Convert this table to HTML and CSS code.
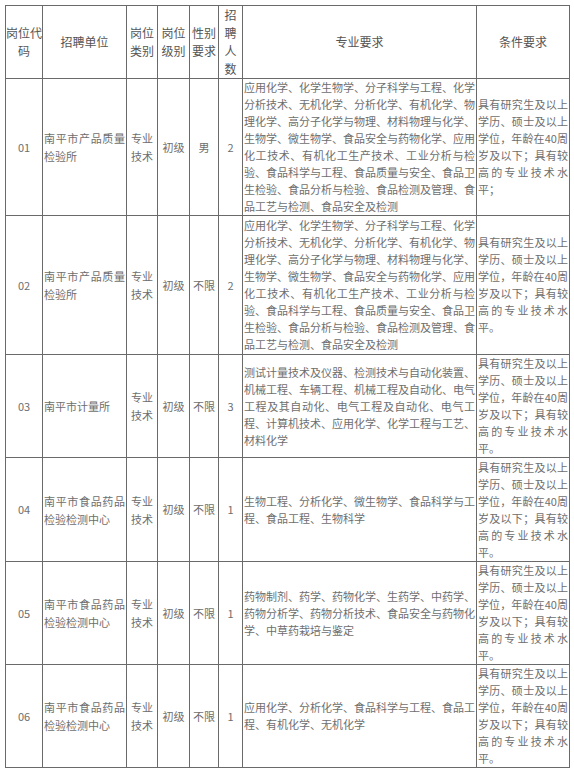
FILE: index.html
```html
<!DOCTYPE html>
<html lang="zh-CN">
<head>
<meta charset="utf-8">
<title>岗位信息表</title>
<link rel="stylesheet" href="styles.css">
</head>
<body>
<table class="jobs">
  <colgroup>
    <col class="c-code">
    <col class="c-unit">
    <col class="c-type">
    <col class="c-level">
    <col class="c-sex">
    <col class="c-num">
    <col class="c-major">
    <col class="c-cond">
  </colgroup>
  <thead>
    <tr class="r-head">
      <th>岗位代码</th>
      <th>招聘单位</th>
      <th>岗位类别</th>
      <th>岗位级别</th>
      <th>性别要求</th>
      <th>招聘人数</th>
      <th>专业要求</th>
      <th>条件要求</th>
    </tr>
  </thead>
  <tbody>
    <tr class="r1">
      <td class="ctr">01</td>
      <td class="txt narrow">南平市产品质量检验所</td>
      <td class="ctr narrow">专业技术</td>
      <td class="ctr">初级</td>
      <td class="ctr">男</td>
      <td class="ctr">2</td>
      <td class="txt">应用化学、化学生物学、分子科学与工程、化学分析技术、无机化学、分析化学、有机化学、物理化学、高分子化学与物理、材料物理与化学、生物学、微生物学、食品安全与药物化学、应用化工技术、有机化工生产技术、工业分析与检验、食品科学与工程、食品质量与安全、食品卫生检验、食品分析与检验、食品检测及管理、食品工艺与检测、食品安全及检测</td>
      <td class="txt">具有研究生及以上学历、硕士及以上学位，年龄在40周岁及以下；具有较高的专业技术水平；</td>
    </tr>
    <tr class="r2">
      <td class="ctr">02</td>
      <td class="txt narrow">南平市产品质量检验所</td>
      <td class="ctr narrow">专业技术</td>
      <td class="ctr">初级</td>
      <td class="ctr">不限</td>
      <td class="ctr">2</td>
      <td class="txt">应用化学、化学生物学、分子科学与工程、化学分析技术、无机化学、分析化学、有机化学、物理化学、高分子化学与物理、材料物理与化学、生物学、微生物学、食品安全与药物化学、应用化工技术、有机化工生产技术、工业分析与检验、食品科学与工程、食品质量与安全、食品卫生检验、食品分析与检验、食品检测及管理、食品工艺与检测、食品安全及检测</td>
      <td class="txt">具有研究生及以上学历、硕士及以上学位，年龄在40周岁及以下；具有较高的专业技术水平。</td>
    </tr>
    <tr class="r3">
      <td class="ctr">03</td>
      <td class="txt narrow">南平市计量所</td>
      <td class="ctr narrow">专业技术</td>
      <td class="ctr">初级</td>
      <td class="ctr">不限</td>
      <td class="ctr">3</td>
      <td class="txt">测试计量技术及仪器、检测技术与自动化装置、机械工程、车辆工程、机械工程及自动化、电气工程及其自动化、电气工程及自动化、电气工程、计算机技术、应用化学、化学工程与工艺、材料化学</td>
      <td class="txt">具有研究生及以上学历、硕士及以上学位，年龄在40周岁及以下；具有较高的专业技术水平。</td>
    </tr>
    <tr class="r4">
      <td class="ctr">04</td>
      <td class="txt narrow">南平市食品药品检验检测中心</td>
      <td class="ctr narrow">专业技术</td>
      <td class="ctr">初级</td>
      <td class="ctr">不限</td>
      <td class="ctr">1</td>
      <td class="txt">生物工程、分析化学、微生物学、食品科学与工程、食品工程、生物科学</td>
      <td class="txt">具有研究生及以上学历、硕士及以上学位，年龄在40周岁及以下；具有较高的专业技术水平。</td>
    </tr>
    <tr class="r5">
      <td class="ctr">05</td>
      <td class="txt narrow">南平市食品药品检验检测中心</td>
      <td class="ctr narrow">专业技术</td>
      <td class="ctr">初级</td>
      <td class="ctr">不限</td>
      <td class="ctr">1</td>
      <td class="txt">药物制剂、药学、药物化学、生药学、中药学、药物分析学、药物分析技术、食品安全与药物化学、中草药栽培与鉴定</td>
      <td class="txt">具有研究生及以上学历、硕士及以上学位，年龄在40周岁及以下；具有较高的专业技术水平。</td>
    </tr>
    <tr class="r6">
      <td class="ctr">06</td>
      <td class="txt narrow">南平市食品药品检验检测中心</td>
      <td class="ctr narrow">专业技术</td>
      <td class="ctr">初级</td>
      <td class="ctr">不限</td>
      <td class="ctr">1</td>
      <td class="txt">应用化学、分析化学、食品科学与工程、食品工程、有机化学、无机化学</td>
      <td class="txt">具有研究生及以上学历、硕士及以上学位，年龄在40周岁及以下；具有较高的专业技术水平。</td>
    </tr>
  </tbody>
</table>
</body>
</html>
```
FILE: styles.css
```css
html, body {
  margin: 0;
  padding: 0;
  background: #ffffff;
}

body {
  padding: 5px 0 0 5px;
  font-family: "Noto Sans CJK SC", "Noto Sans", sans-serif;
}

.jobs {
  border-collapse: collapse;
  table-layout: fixed;
  width: 564px;
}

.jobs th,
.jobs td {
  border: 1px solid #6a6a6a;
  vertical-align: middle;
  overflow: hidden;
}

.c-code { width: 37px; }
.c-unit { width: 84px; }
.c-type { width: 31px; }
.c-level { width: 32px; }
.c-sex { width: 29px; }
.c-num { width: 24px; }
.c-major { width: 234px; }
.c-cond { width: 93px; }

.jobs th {
  font-weight: normal;
  font-size: 12px;
  line-height: 18px;
  color: #555555;
  text-align: center;
  padding: 0;
}

.jobs td {
  font-size: 11px;
  line-height: 17px;
  color: #6e6e6e;
  padding: 0 1px;
}

.jobs td.ctr {
  text-align: center;
}

.jobs td.txt {
  text-align: justify;
  line-break: strict;
}

.jobs td.narrow {
  line-height: 18px;
}

.r-head { height: 73px; }
.r1 { height: 136px; }
.r2 { height: 139px; }
.r3 { height: 103px; }
.r4 { height: 104px; }
.r5 { height: 103px; }
.r6 { height: 102px; }
```
